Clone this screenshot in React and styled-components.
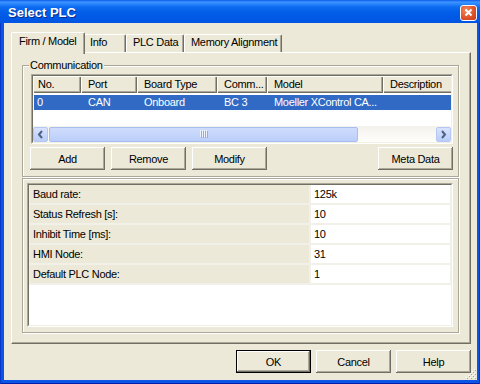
import React from 'react'
import styled, { createGlobalStyle, css } from 'styled-components'

const GlobalStyle = createGlobalStyle`
	html, body {
		margin: 0;
		padding: 0;
		background: #fff;
	}
	body {
		font-family: "Liberation Sans", Arial, sans-serif;
		font-size: 11px;
		letter-spacing: -0.3px;
		color: #000;
	}
`

const Window = styled.div`
	width: 480px;
	height: 384px;
	display: flex;
	flex-direction: column;
	background: #0a55e6;
	box-shadow: inset 1px 0 0 #0838c8, inset -1px 0 0 #0838c8, inset 0 -1px 0 #001ea8;
`

const TitleBar = styled.div`
	height: 23px;
	flex: none;
	display: flex;
	align-items: center;
	padding: 2px 3px 0 8px;
	box-sizing: border-box;
	background: linear-gradient(
		to bottom,
		#0a5ae9 0px,
		#3d95ff 2px,
		#2a86fb 4px,
		#0c6cf0 7px,
		#0460e8 11px,
		#005ae6 16px,
		#0055e3 23px
	);
`

const Title = styled.div`
	flex: 1;
	color: #fff;
	font-weight: bold;
	font-size: 13px;
	letter-spacing: 0;
	text-shadow: 1px 1px 0 #0d2a8a;
`

const CloseButton = styled.div`
	width: 17px;
	height: 16px;
	box-sizing: border-box;
	border: 1px solid #fff;
	border-radius: 3px;
	background: radial-gradient(circle at 35% 30%, #f08a62 0%, #e2532b 55%, #c4391a 100%);
	display: flex;
	align-items: center;
	justify-content: center;
`

const Client = styled.div`
	flex: 1;
	margin: 0 3px 4px 4px;
	background: #ece9d8;
	display: flex;
	flex-direction: column;
	padding: 9px 6px 7px 7px;
	position: relative;
`

const TabStrip = styled.div`
	display: flex;
	align-items: flex-end;
	height: 20px;
	padding-left: 2px;
	flex: none;
`

const Tab = styled.div`
	position: relative;
	width: ${p => p.$w}px;
	height: 18px;
	box-sizing: border-box;
	background: #ece9d8;
	border-top: 1px solid #fff;
	border-left: 1px solid #fff;
	border-right: 1px solid #716f64;
	border-top-left-radius: 2px;
	border-top-right-radius: 2px;
	box-shadow: inset -1px 0 0 #aca899;
	padding-left: 6px;
	line-height: 15px;
	white-space: nowrap;
	overflow: hidden;
	${p =>
		p.$active &&
		css`
			height: 22px;
			margin: 0 -2px -2px -2px;
			z-index: 2;
			padding-left: 7px;
			line-height: 16px;
		`}
`

const Panel = styled.div`
	height: 292px;
	flex: none;
	box-sizing: border-box;
	border-top: 1px solid #fff;
	border-left: 1px solid #fff;
	border-right: 1px solid #716f64;
	border-bottom: 1px solid #716f64;
	box-shadow: inset -1px -1px 0 #aca899;
	padding: 6px 11px 0 10px;
	display: flex;
	flex-direction: column;
`

const GroupBox = styled.fieldset`
	margin: 0;
	padding: 0 5px 6px 8px;
	min-width: 0;
	border: 1px solid #aca899;
	box-shadow: inset 1px 1px 0 #fff, 1px 1px 0 #fff;
`

const Legend = styled.legend`
	padding: 0 1px;
	margin-left: -2px;
	line-height: 13px;
	background: #ece9d8;
`

const ListFrame = styled.div`
	margin-top: 2px;
	height: 70px;
	box-sizing: border-box;
	border: 1px solid;
	border-color: #aca899 #fff #fff #aca899;
	display: flex;
`

const ListBody = styled.div`
	flex: 1;
	min-width: 0;
	border: 1px solid;
	border-color: #716f64 #f1efe2 #f1efe2 #716f64;
	background: #fff;
	display: flex;
	flex-direction: column;
	overflow: hidden;
`

const HeaderRow = styled.div`
	display: flex;
	height: 17px;
	flex: none;
	background: #ece9d8;
`

const HeaderCell = styled.div`
	flex: none;
	width: ${p => p.$w}px;
	box-sizing: border-box;
	padding-left: ${p => (p.$first ? 5 : 7)}px;
	line-height: 16px;
	white-space: nowrap;
	overflow: hidden;
	box-shadow: inset 1px 1px 0 #fff, inset -1px -1px 0 #716f64, inset -2px -2px 0 #aca899;
`

const ItemRow = styled.div`
	display: flex;
	height: 15px;
	margin: 2px 0 0 1px;
	flex: none;
	background: ${p => (p.$selected ? '#316ac5' : 'transparent')};
	color: ${p => (p.$selected ? '#fff' : '#000')};
`

const ItemCell = styled.div`
	flex: none;
	width: ${p => p.$w}px;
	box-sizing: border-box;
	padding-left: ${p => (p.$first ? 3 : 7)}px;
	line-height: 15px;
	white-space: nowrap;
	overflow: hidden;
`

const ListSpace = styled.div`
	flex: 1;
`

const HScroll = styled.div`
	height: 16px;
	flex: none;
	display: flex;
	align-items: center;
	background: linear-gradient(to bottom, #f3f1ec, #fefefb);
`

const ScrollArrow = styled.div`
	width: 15px;
	height: 15px;
	flex: none;
	box-sizing: border-box;
	border: 1px solid #b5c8f3;
	border-radius: 2px;
	background: linear-gradient(to bottom, #d8e3fd, #b9cdf9);
	display: flex;
	align-items: center;
	justify-content: center;
`

const Thumb = styled.div`
	width: ${p => p.$w}px;
	height: 15px;
	margin-left: 1px;
	flex: none;
	box-sizing: border-box;
	border: 1px solid #a9bdf0;
	border-radius: 2px;
	background: linear-gradient(to bottom, #cfdcfd, #bccff9);
	display: flex;
	align-items: center;
	justify-content: center;
`

const Track = styled.div`
	flex: 1;
`

const ButtonRow = styled.div`
	display: flex;
	gap: 6px;
	margin: 3px 0 0 -1px;
`

const Button = styled.button`
	width: 75px;
	height: 23px;
	flex: none;
	padding: 0;
	border: none;
	background: #ece9d8;
	font: inherit;
	letter-spacing: inherit;
	color: #000;
	box-shadow: inset -1px -1px 0 #716f64, inset 1px 1px 0 #fff, inset -2px -2px 0 #aca899;
	${p =>
		p.$default &&
		css`
			box-shadow: inset 0 0 0 1px #000, inset -2px -2px 0 #716f64, inset 2px 2px 0 #fff,
				inset -3px -3px 0 #aca899;
		`}
	${p =>
		p.$push &&
		css`
			margin-left: auto;
		`}
`

const PropFrame = styled.div`
	margin-top: 1px;
	height: 155px;
	box-sizing: border-box;
	border: 1px solid #aca899;
	box-shadow: inset 1px 1px 0 #fff, 1px 1px 0 #fff;
	padding: 4px 5px 5px 4px;
	display: flex;
`

const GridOuter = styled.div`
	flex: 1;
	border: 1px solid;
	border-color: #aca899 #fff #fff #aca899;
	display: flex;
`

const GridInner = styled.div`
	flex: 1;
	border: 1px solid;
	border-color: #716f64 #f1efe2 #f1efe2 #716f64;
	background: #fff;
`

const PropRow = styled.div`
	display: grid;
	grid-template-columns: 279px 139px;
	column-gap: 2px;
	padding: 0 1px 2px 1px;
	background: #f1f0e9;
`

const PropLabel = styled.div`
	height: 18px;
	line-height: 18px;
	padding-left: 3px;
	background: #ece9d8;
	white-space: nowrap;
`

const PropValue = styled.div`
	height: 18px;
	line-height: 18px;
	padding-left: 3px;
	background: #fff;
`

const Footer = styled.div`
	display: flex;
	justify-content: flex-end;
	gap: 5px;
	margin-top: 6px;
`

const Grip = styled.svg`
	position: absolute;
	right: 0;
	bottom: 0;
`

const columns = [
	{ label: 'No.', w: 48 },
	{ label: 'Port', w: 56 },
	{ label: 'Board Type', w: 80 },
	{ label: 'Comm...', w: 50 },
	{ label: 'Model', w: 116 },
	{ label: 'Description', w: 100 },
]

const item = ['0', 'CAN', 'Onboard', 'BC 3', 'Moeller XControl CA...', '']

const tabs = [
	{ label: 'Firm / Model', w: 74, active: true },
	{ label: 'Info', w: 43 },
	{ label: 'PLC Data', w: 58 },
	{ label: 'Memory Alignment', w: 98 },
]

const props = [
	['Baud rate:', '125k'],
	['Status Refresh [s]:', '10'],
	['Inhibit Time [ms]:', '10'],
	['HMI Node:', '31'],
	['Default PLC Node:', '1'],
]

const Chevron = ({ dir }) => (
	<svg width="7" height="9" viewBox="0 0 7 9">
		<polyline
			points={dir === 'left' ? '5,1 2,4.5 5,8' : '2,1 5,4.5 2,8'}
			fill="none"
			stroke="#4d6185"
			strokeWidth="2"
		/>
	</svg>
)

const ThumbGrip = () => (
	<svg width="8" height="8" viewBox="0 0 8 8">
		{[0, 2, 4, 6].map(x => (
			<g key={x}>
				<rect x={x} y="0" width="1" height="7" fill="#eef4fe" />
				<rect x={x + 1} y="1" width="1" height="7" fill="#8caef0" />
			</g>
		))}
	</svg>
)

const App = () => {
	return (
		<>
			<GlobalStyle />
			<Window>
				<TitleBar>
					<Title>Select PLC</Title>
					<CloseButton>
						<svg width="9" height="9" viewBox="0 0 9 9">
							<path d="M1.5 1.5 L7.5 7.5 M7.5 1.5 L1.5 7.5" stroke="#fff" strokeWidth="2" />
						</svg>
					</CloseButton>
				</TitleBar>
				<Client>
					<TabStrip>
						{tabs.map(t => (
							<Tab key={t.label} $w={t.w} $active={t.active}>
								{t.label}
							</Tab>
						))}
					</TabStrip>
					<Panel>
						<GroupBox>
							<Legend>Communication</Legend>
							<ListFrame>
								<ListBody>
									<HeaderRow>
										{columns.map((c, i) => (
											<HeaderCell key={c.label} $w={c.w} $first={i === 0}>
												{c.label}
											</HeaderCell>
										))}
									</HeaderRow>
									<ItemRow $selected>
										{item.map((v, i) => (
											<ItemCell key={i} $w={i === 0 ? columns[i].w - 1 : columns[i].w} $first={i === 0}>
												{v}
											</ItemCell>
										))}
									</ItemRow>
									<ListSpace />
									<HScroll>
										<ScrollArrow>
											<Chevron dir="left" />
										</ScrollArrow>
										<Thumb $w={309}>
											<ThumbGrip />
										</Thumb>
										<Track />
										<ScrollArrow>
											<Chevron dir="right" />
										</ScrollArrow>
									</HScroll>
								</ListBody>
							</ListFrame>
							<ButtonRow>
								<Button>Add</Button>
								<Button>Remove</Button>
								<Button>Modify</Button>
								<Button $push>Meta Data</Button>
							</ButtonRow>
						</GroupBox>
						<PropFrame>
							<GridOuter>
								<GridInner>
									{props.map(([k, v]) => (
										<PropRow key={k}>
											<PropLabel>{k}</PropLabel>
											<PropValue>{v}</PropValue>
										</PropRow>
									))}
								</GridInner>
							</GridOuter>
						</PropFrame>
					</Panel>
					<Footer>
						<Button $default>OK</Button>
						<Button>Cancel</Button>
						<Button>Help</Button>
					</Footer>
					<Grip width="12" height="12" viewBox="0 0 12 12">
						{[
							[10, 2], [10, 6], [10, 10], [6, 6], [6, 10], [2, 10],
							[8, 4], [8, 8], [4, 8],
						].map(([x, y]) => (
							<g key={`${x}-${y}`}>
								<rect x={x - 1} y={y - 1} width="1" height="1" fill="#fff" />
								<rect x={x} y={y} width="1" height="1" fill="#aca899" />
							</g>
						))}
					</Grip>
				</Client>
			</Window>
		</>
	)
}

export default App
